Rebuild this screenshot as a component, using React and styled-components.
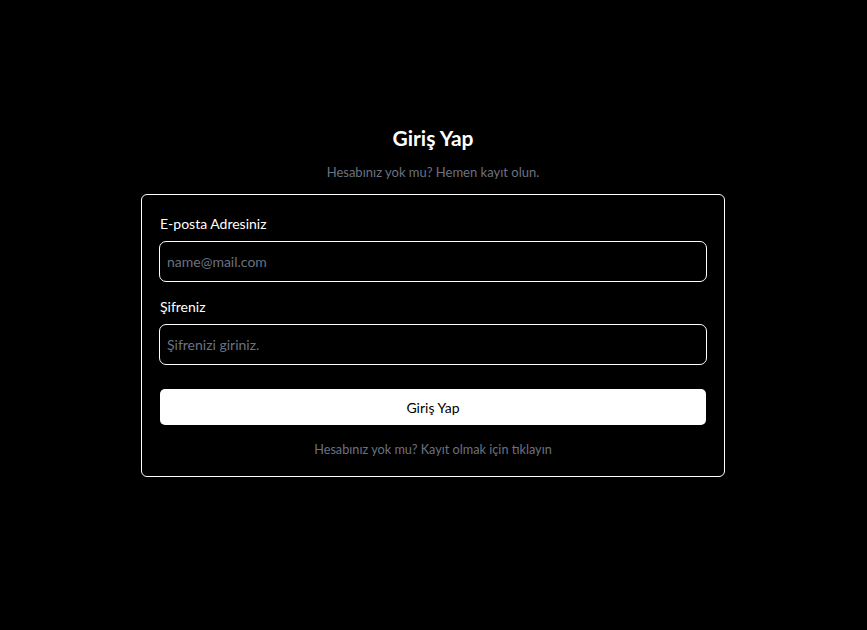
import styled, { createGlobalStyle } from "styled-components";

const GlobalStyle = createGlobalStyle`
  html, body {
    margin: 0;
    padding: 0;
    background: #000;
  }
  body {
    font-family: Lato, "Noto Sans", sans-serif;
    color: #fff;
  }
  * {
    box-sizing: border-box;
  }
`;

const Page = styled.div`
  min-height: 630px;
  display: flex;
  flex-direction: column;
  align-items: center;
  padding: 124px 1px 0 0;
`;

const Title = styled.h1`
  margin: 0;
  font-size: 21px;
  font-weight: 700;
  line-height: 28px;
`;

const Subtitle = styled.p`
  margin: 11px 0 13px;
  font-size: 13px;
  line-height: 18px;
  color: #6b7280;
`;

const Card = styled.form`
  width: 584px;
  border: 1px solid #fff;
  border-radius: 6px;
  padding: 18px 17px 18px 17px;
  display: flex;
  flex-direction: column;
`;

const Field = styled.div`
  display: flex;
  flex-direction: column;
  gap: 6px;
  margin-bottom: 14px;
`;

const Label = styled.label`
  font-size: 14px;
  line-height: 22px;
  padding-left: 1px;
`;

const Input = styled.input`
  height: 41px;
  width: 100%;
  background: #000;
  border: 1px solid #fff;
  border-radius: 7px;
  padding: 0 7px;
  color: #fff;
  font-family: inherit;
  font-size: 14px;
  outline: none;

  &::placeholder {
    color: #6b7280;
  }
`;

const Button = styled.button`
  margin: 10px 1px 0;
  height: 36px;
  border: none;
  border-radius: 5px;
  background: #fff;
  color: #000;
  font-family: inherit;
  font-size: 14px;
  cursor: pointer;
`;

const Footer = styled.p`
  margin: 15px 0 0;
  text-align: center;
  font-size: 12.7px;
  line-height: 18px;
  color: #6b7280;
`;

export default function App() {
  return (
    <>
      <GlobalStyle />
      <Page>
        <Title>Giriş Yap</Title>
        <Subtitle>Hesabınız yok mu? Hemen kayıt olun.</Subtitle>
        <Card onSubmit={(e) => e.preventDefault()}>
          <Field>
            <Label>E-posta Adresiniz</Label>
            <Input type="email" placeholder="name@mail.com" />
          </Field>
          <Field>
            <Label>Şifreniz</Label>
            <Input type="password" placeholder="Şifrenizi giriniz." />
          </Field>
          <Button type="submit">Giriş Yap</Button>
          <Footer>Hesabınız yok mu? Kayıt olmak için tıklayın</Footer>
        </Card>
      </Page>
    </>
  );
}
